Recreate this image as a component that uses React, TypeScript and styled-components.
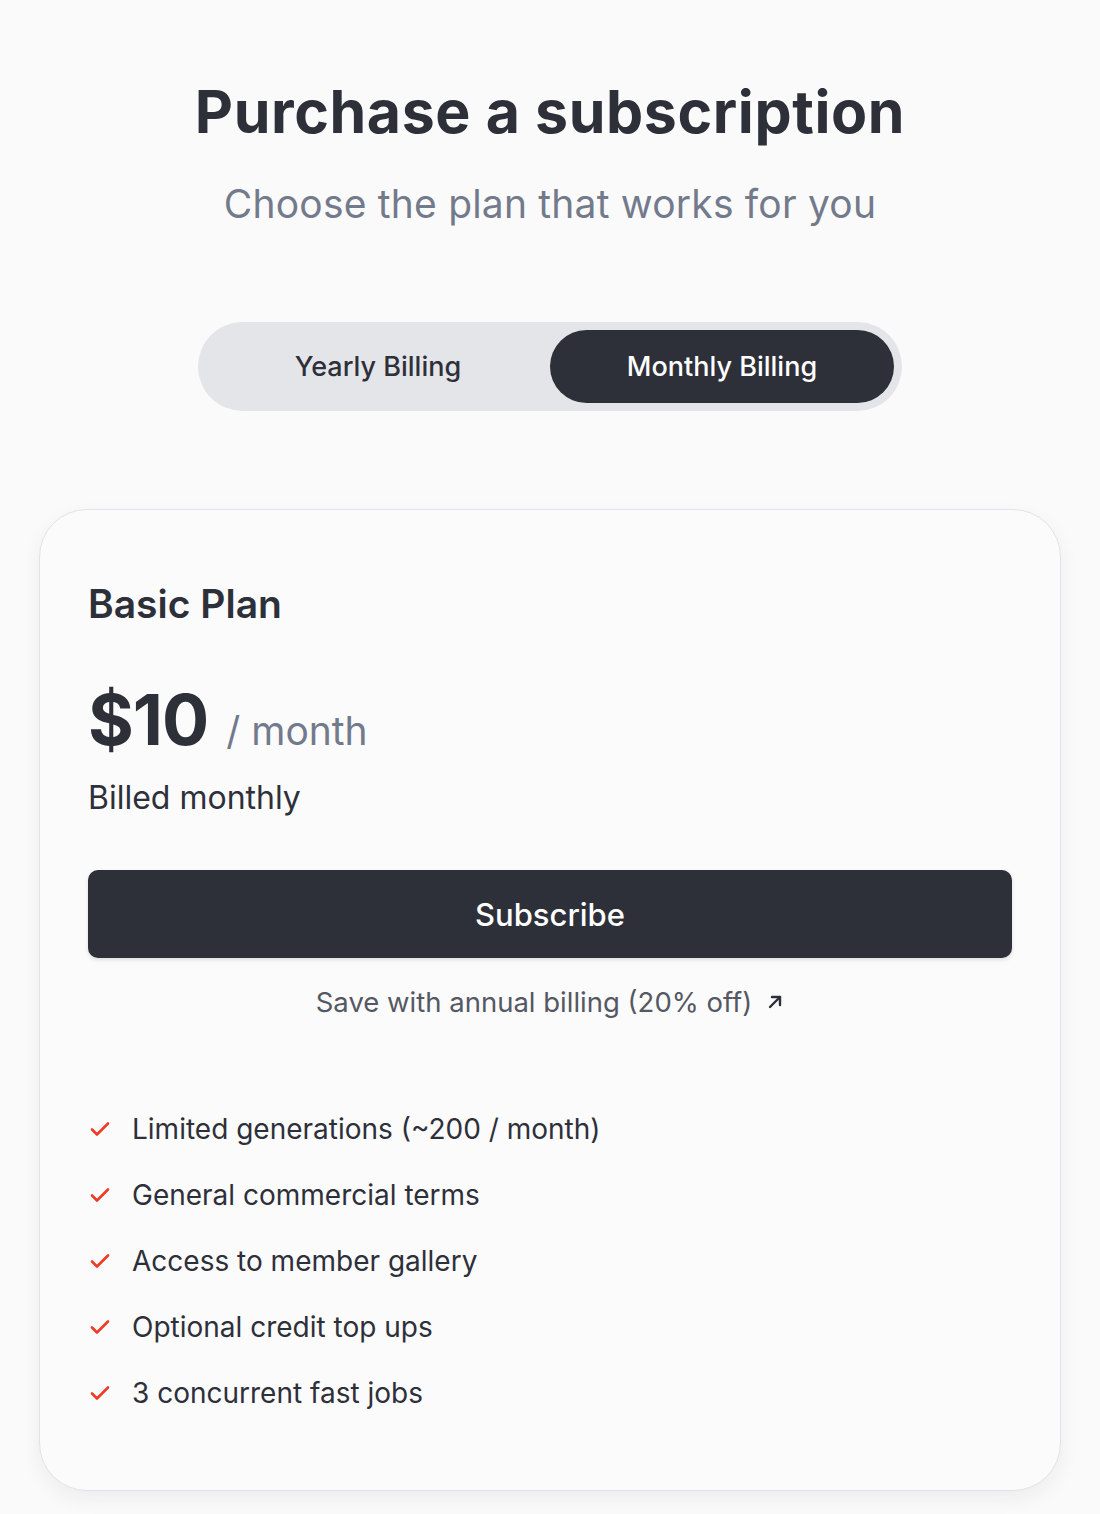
import React from "react";
import styled, { createGlobalStyle } from "styled-components";

const Global = createGlobalStyle`
  html, body { margin: 0; padding: 0; background: #fafafa; }
  body { font-family: Inter, "Noto Sans", sans-serif; color: #2e3039; }
  * { box-sizing: border-box; }
`;

const Page = styled.main`
  display: flex;
  flex-direction: column;
  align-items: center;
  padding: 76px 38px 24px 38px;
`;

const Title = styled.h1`
  margin: 0;
  font-size: 59px;
  line-height: 72px;
  font-weight: 700;
  letter-spacing: 0.6px;
  color: #2e3039;
`;

const Subtitle = styled.p`
  margin: 32px 0 0 0;
  font-size: 39px;
  line-height: 48px;
  font-weight: 400;
  letter-spacing: 0.2px;
  color: #737a8c;
`;

const Toggle = styled.div`
  margin-top: 94px;
  width: 704px;
  height: 89px;
  padding: 8px;
  border-radius: 45px;
  background: #e4e5e9;
  display: grid;
  grid-template-columns: 1fr 1fr;
`;

const ToggleOption = styled.button<{ $active?: boolean }>`
  border: none;
  border-radius: 37px;
  font-family: inherit;
  font-size: 27px;
  font-weight: 500;
  background: ${(p) => (p.$active ? "#2e3039" : "transparent")};
  color: ${(p) => (p.$active ? "#ffffff" : "#2e3039")};
  cursor: pointer;
`;

const Card = styled.section`
  margin-top: 98px;
  width: 1022px;
  border: 1.5px solid #e2e3e6;
  border-radius: 48px;
  background: #fbfbfc;
  box-shadow: 0 8px 20px rgba(30, 32, 40, 0.06);
  padding: 70px 48px 79px 48px;
  display: flex;
  flex-direction: column;
`;

const PlanName = styled.h2`
  margin: 0;
  font-size: 39px;
  line-height: 48px;
  font-weight: 600;
  color: #2e3039;
`;

const PriceRow = styled.div`
  margin-top: 52px;
  display: flex;
  align-items: baseline;
  gap: 18px;
`;

const Price = styled.span`
  font-size: 70px;
  line-height: 80px;
  font-weight: 700;
  letter-spacing: -1px;
  color: #2e3039;
`;

const Period = styled.span`
  font-size: 39px;
  font-weight: 400;
  color: #737a8c;
`;

const Billed = styled.p`
  margin: 18px 0 0 0;
  font-size: 32px;
  line-height: 40px;
  font-weight: 400;
  color: #2e3039;
`;

const SubscribeButton = styled.button`
  margin-top: 52px;
  height: 88px;
  width: 100%;
  border: none;
  border-radius: 10px;
  background: #2e3039;
  color: #ffffff;
  font-family: inherit;
  font-size: 31px;
  font-weight: 500;
  box-shadow: 0 2px 4px rgba(0, 0, 0, 0.12);
  cursor: pointer;
`;

const SaveLink = styled.a`
  margin-top: 26px;
  align-self: center;
  display: flex;
  align-items: center;
  gap: 14px;
  font-size: 27.5px;
  line-height: 36px;
  color: #555863;
  text-decoration: none;
`;

const Features = styled.ul`
  list-style: none;
  margin: 91px 0 0 0;
  padding: 0;
  display: flex;
  flex-direction: column;
  gap: 30px;
`;

const Feature = styled.li`
  display: flex;
  align-items: center;
  gap: 20px;
  font-size: 28px;
  line-height: 36px;
  color: #2e3039;
`;

const CheckIcon = () => (
  <svg width="24" height="24" viewBox="0 0 24 24" fill="none" stroke="#ef3b24" strokeWidth="2.6" strokeLinecap="round" strokeLinejoin="round">
    <path d="M4 12.5l5 5L20 6.5" />
  </svg>
);

const ArrowIcon = () => (
  <svg width="18" height="18" viewBox="0 0 18 18" fill="none" stroke="#2e3039" strokeWidth="2.4" strokeLinecap="round" strokeLinejoin="round">
    <path d="M4 14L14 4" />
    <path d="M6 4h8v8" />
  </svg>
);

const features = [
  "Limited generations (~200 / month)",
  "General commercial terms",
  "Access to member gallery",
  "Optional credit top ups",
  "3 concurrent fast jobs",
];

export default function App() {
  return (
    <>
      <Global />
      <Page>
        <Title>Purchase a subscription</Title>
        <Subtitle>Choose the plan that works for you</Subtitle>
        <Toggle>
          <ToggleOption>Yearly Billing</ToggleOption>
          <ToggleOption $active>Monthly Billing</ToggleOption>
        </Toggle>
        <Card>
          <PlanName>Basic Plan</PlanName>
          <PriceRow>
            <Price>$10</Price>
            <Period>/ month</Period>
          </PriceRow>
          <Billed>Billed monthly</Billed>
          <SubscribeButton>Subscribe</SubscribeButton>
          <SaveLink href="#">
            Save with annual billing (20% off)
            <ArrowIcon />
          </SaveLink>
          <Features>
            {features.map((f) => (
              <Feature key={f}>
                <CheckIcon />
                {f}
              </Feature>
            ))}
          </Features>
        </Card>
      </Page>
    </>
  );
}
